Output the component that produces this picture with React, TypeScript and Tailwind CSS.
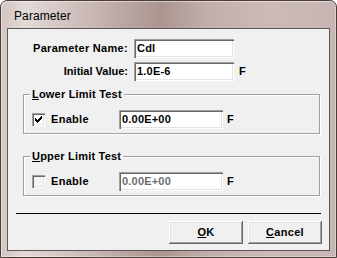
import React from "react";

const font = { fontFamily: '"Liberation Sans", Arial, sans-serif' };

const sunken =
  "shadow-[inset_1px_1px_0_#a0a0a0,inset_2px_2px_0_#696969,inset_-1px_-1px_0_#ffffff,inset_-2px_-2px_0_#e3e3e3]";
const raised =
  "shadow-[inset_-1px_-1px_0_#696969,inset_1px_1px_0_#ffffff,inset_-2px_-2px_0_#a0a0a0,inset_2px_2px_0_#e3e3e3]";

function TextBox({ value, w, disabled }: { value: string; w: string; disabled?: boolean }) {
  return (
    <div
      className={`${w} h-[19px] bg-white ${sunken} flex items-center pl-[3px] text-[11px] font-bold leading-none tracking-[0.2px] ${
        disabled ? "text-[#6d6d6d]" : "text-black"
      }`}
    >
      {value}
    </div>
  );
}

function CheckBox({ checked }: { checked?: boolean }) {
  return (
    <div
      className={`w-[13px] h-[13px] ${checked ? "bg-white" : "bg-[#f4f4f4]"} ${sunken} flex items-center justify-center`}
    >
      {checked && (
        <svg width="7" height="7" viewBox="0 0 7 7" shapeRendering="crispEdges">
          <path
            d="M0 2h1v3h-1z M1 3h1v3h-1z M2 4h1v3h-1z M3 3h1v3h-1z M4 2h1v3h-1z M5 1h1v3h-1z M6 0h1v3h-1z"
            fill="#000"
          />
        </svg>
      )}
    </div>
  );
}

function Group({
  first,
  rest,
  checked,
  disabled,
  className,
}: {
  first: string;
  rest: string;
  checked?: boolean;
  disabled?: boolean;
  className?: string;
}) {
  return (
    <div
      className={`relative ml-[15px] w-[297px] h-[40px] border border-[#a0a0a0] shadow-[inset_1px_1px_0_#ffffff,1px_1px_0_#ffffff] pt-[15px] pl-[8px] ${className ?? ""}`}
    >
      <div className="absolute left-[6px] top-[-8px] px-[2px] bg-[#f0f0f0] text-[11px] font-bold leading-[14px] text-black tracking-[0.2px]">
        <span className="underline underline-offset-[1px]">{first}</span>
        {rest}
      </div>
      <div className="flex items-center h-[19px]">
        <CheckBox checked={checked} />
        <span className="ml-[6px] w-[68px] text-[11px] font-bold leading-none text-black tracking-[0.3px]">Enable</span>
        <TextBox value="0.00E+00" w="w-[104px]" disabled={disabled} />
        <span className="ml-[4px] text-[11px] font-bold leading-none text-black">F</span>
      </div>
    </div>
  );
}

function Button({ first, rest, className }: { first: string; rest: string; className?: string }) {
  return (
    <div
      className={`w-[74px] h-[23px] bg-[#f0f0f0] ${raised} flex items-center justify-center text-[11px] font-bold leading-none text-black tracking-[0.3px] ${className ?? ""}`}
    >
      <span>
        <span className="underline underline-offset-[1px]">{first}</span>
        {rest}
      </span>
    </div>
  );
}

export default function App() {
  return (
    <div
      style={font}
      className="w-[337px] h-[258px] flex flex-col rounded-t-[7px] border border-[#4b3c3a] bg-[linear-gradient(90deg,#d2c4c2_0%,#e3dad8_7%,#cfc0bd_22%,#b8a4a0_38%,#ab9591_48%,#c2afab_62%,#cbbab7_80%,#c6b5b2_100%)] px-[6px] pb-[6px] shadow-[inset_1px_1px_0_rgba(255,255,255,0.5),inset_-1px_-1px_0_rgba(255,255,255,0.35)]"
    >
      <div className="h-[27px] flex items-center pl-[7px] pt-[2px]">
        <span className="text-[12px] leading-none text-black tracking-[0.1px]">Parameter</span>
      </div>
      <div className="flex-1 border border-[#5e5554] bg-[#f0f0f0] flex flex-col pt-[10px]">
        <div className="flex items-center h-[19px]">
          <span className="w-[120px] text-right text-[11px] font-bold leading-none text-black tracking-[0.3px]">
            Parameter Name:
          </span>
          <TextBox value="Cdl" w="w-[100px] ml-[6px]" />
        </div>
        <div className="flex items-center h-[19px] mt-[4px]">
          <span className="w-[120px] text-right text-[11px] font-bold leading-none text-black">Initial Value:</span>
          <TextBox value="1.0E-6" w="w-[100px] ml-[6px]" />
          <span className="ml-[5px] text-[11px] font-bold leading-none text-black">F</span>
        </div>
        <Group first="L" rest="ower Limit Test" checked className="mt-[13px]" />
        <Group first="U" rest="pper Limit Test" disabled className="mt-[22px]" />
        <div className="mt-[17px] ml-[8px] w-[305px] h-px bg-black" />
        <div className="mt-[7px] flex justify-end gap-[5px] pr-[7px]">
          <Button first="O" rest="K" />
          <Button first="C" rest="ancel" />
        </div>
      </div>
    </div>
  );
}
